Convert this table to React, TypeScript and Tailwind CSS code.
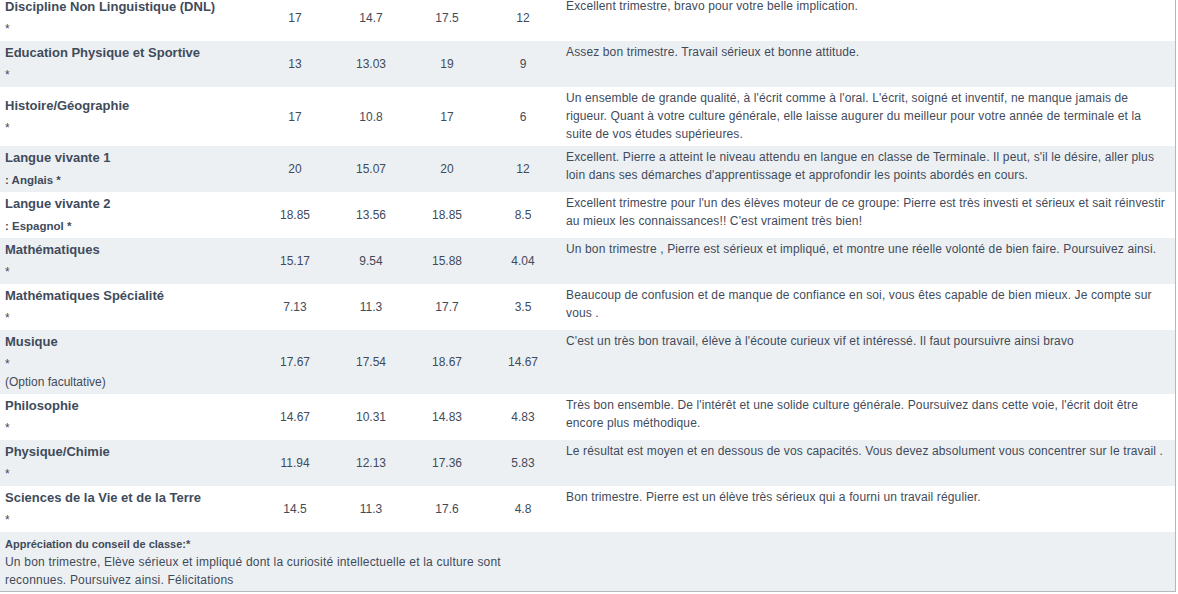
import React from "react";

interface Row {
  subject: string;
  sub?: string;
  option?: string;
  marks: string[];
  comment: string;
}

const rows: Row[] = [
  { subject: "Discipline Non Linguistique (DNL)", marks: ["17", "14.7", "17.5", "12"], comment: "Excellent trimestre, bravo pour votre belle implication." },
  { subject: "Education Physique et Sportive", marks: ["13", "13.03", "19", "9"], comment: "Assez bon trimestre. Travail sérieux et bonne attitude." },
  {
    subject: "Histoire/Géographie",
    marks: ["17", "10.8", "17", "6"],
    comment:
      "Un ensemble de grande qualité, à l'écrit comme à l'oral. L'écrit, soigné et inventif, ne manque jamais de rigueur. Quant à votre culture générale, elle laisse augurer du meilleur pour votre année de terminale et la suite de vos études supérieures.",
  },
  {
    subject: "Langue vivante 1",
    sub: ": Anglais *",
    marks: ["20", "15.07", "20", "12"],
    comment:
      "Excellent. Pierre a atteint le niveau attendu en langue en classe de Terminale. Il peut, s'il le désire, aller plus loin dans ses démarches d'apprentissage et approfondir les points abordés en cours.",
  },
  {
    subject: "Langue vivante 2",
    sub: ": Espagnol *",
    marks: ["18.85", "13.56", "18.85", "8.5"],
    comment:
      "Excellent trimestre pour l'un des élèves moteur de ce groupe: Pierre est très investi et sérieux et sait réinvestir au mieux les connaissances!! C'est vraiment très bien!",
  },
  {
    subject: "Mathématiques",
    marks: ["15.17", "9.54", "15.88", "4.04"],
    comment: "Un bon trimestre , Pierre est sérieux et impliqué, et montre une réelle volonté de bien faire. Poursuivez ainsi.",
  },
  {
    subject: "Mathématiques Spécialité",
    marks: ["7.13", "11.3", "17.7", "3.5"],
    comment: "Beaucoup de confusion et de manque de confiance en soi, vous êtes capable de bien mieux. Je compte sur vous .",
  },
  {
    subject: "Musique",
    option: "(Option facultative)",
    marks: ["17.67", "17.54", "18.67", "14.67"],
    comment: "C'est un très bon travail, élève à l'écoute curieux vif et intéressé. Il faut poursuivre ainsi bravo",
  },
  {
    subject: "Philosophie",
    marks: ["14.67", "10.31", "14.83", "4.83"],
    comment: "Très bon ensemble. De l'intérêt et une solide culture générale. Poursuivez dans cette voie, l'écrit doit être encore plus méthodique.",
  },
  {
    subject: "Physique/Chimie",
    marks: ["11.94", "12.13", "17.36", "5.83"],
    comment: "Le résultat est moyen et en dessous de vos capacités. Vous devez absolument vous concentrer sur le travail .",
  },
  {
    subject: "Sciences de la Vie et de la Terre",
    marks: ["14.5", "11.3", "17.6", "4.8"],
    comment: "Bon trimestre. Pierre est un élève très sérieux qui a fourni un travail régulier.",
  },
];

export default function App() {
  return (
    <div className="bg-white w-[1178px] h-[594px] overflow-hidden font-['Liberation_Sans',Arial,sans-serif] text-[#3f4b5b]">
      <table className="table-fixed border-collapse w-[1176px] -mt-[5px] border-r border-b border-[#b3b7c0]">
        <colgroup>
          <col className="w-[257px]" />
          <col className="w-[76px]" />
          <col className="w-[76px]" />
          <col className="w-[76px]" />
          <col className="w-[76px]" />
          <col />
        </colgroup>
        <tbody>
          {rows.map((r, i) => (
            <tr key={i} className={i % 2 === 1 ? "bg-[#edf0f2]" : "bg-white"}>
              {/* subject, with its asterisk / language line below */}
              <td className="align-middle px-[5px] pt-[2px] pb-[3px]">
                <div className="font-bold text-[13px] leading-[20px]">{r.subject}</div>
                {r.sub ? (
                  <div className="font-bold text-[11.5px] leading-[18px] pt-[3px]">{r.sub}</div>
                ) : (
                  <div className="text-[12px] leading-[18px] pt-[3px]">*</div>
                )}
                {r.option && <div className="text-[12px] leading-[18px]">{r.option}</div>}
              </td>
              {r.marks.map((m, j) => (
                <td key={j} className="align-middle text-center text-[12px] px-1">
                  {m}
                </td>
              ))}
              <td className="align-top text-[12px] leading-[18px] tracking-[0.13px] px-[5px] pt-[2px] pb-[3px]">
                {r.comment}
              </td>
            </tr>
          ))}
          <tr className="bg-[#edf0f2]">
            <td colSpan={5} className="align-top px-[5px] pt-[3px] pb-[2px] text-[12px] leading-[18px] tracking-[0.2px]">
              <div className="font-bold text-[11px] tracking-normal">Appréciation du conseil de classe:*</div>
              <div>
                Un bon trimestre, Elève sérieux et impliqué dont la curiosité intellectuelle et la culture sont reconnues.
                Poursuivez ainsi. Félicitations
              </div>
            </td>
            <td></td>
          </tr>
        </tbody>
      </table>
    </div>
  );
}
